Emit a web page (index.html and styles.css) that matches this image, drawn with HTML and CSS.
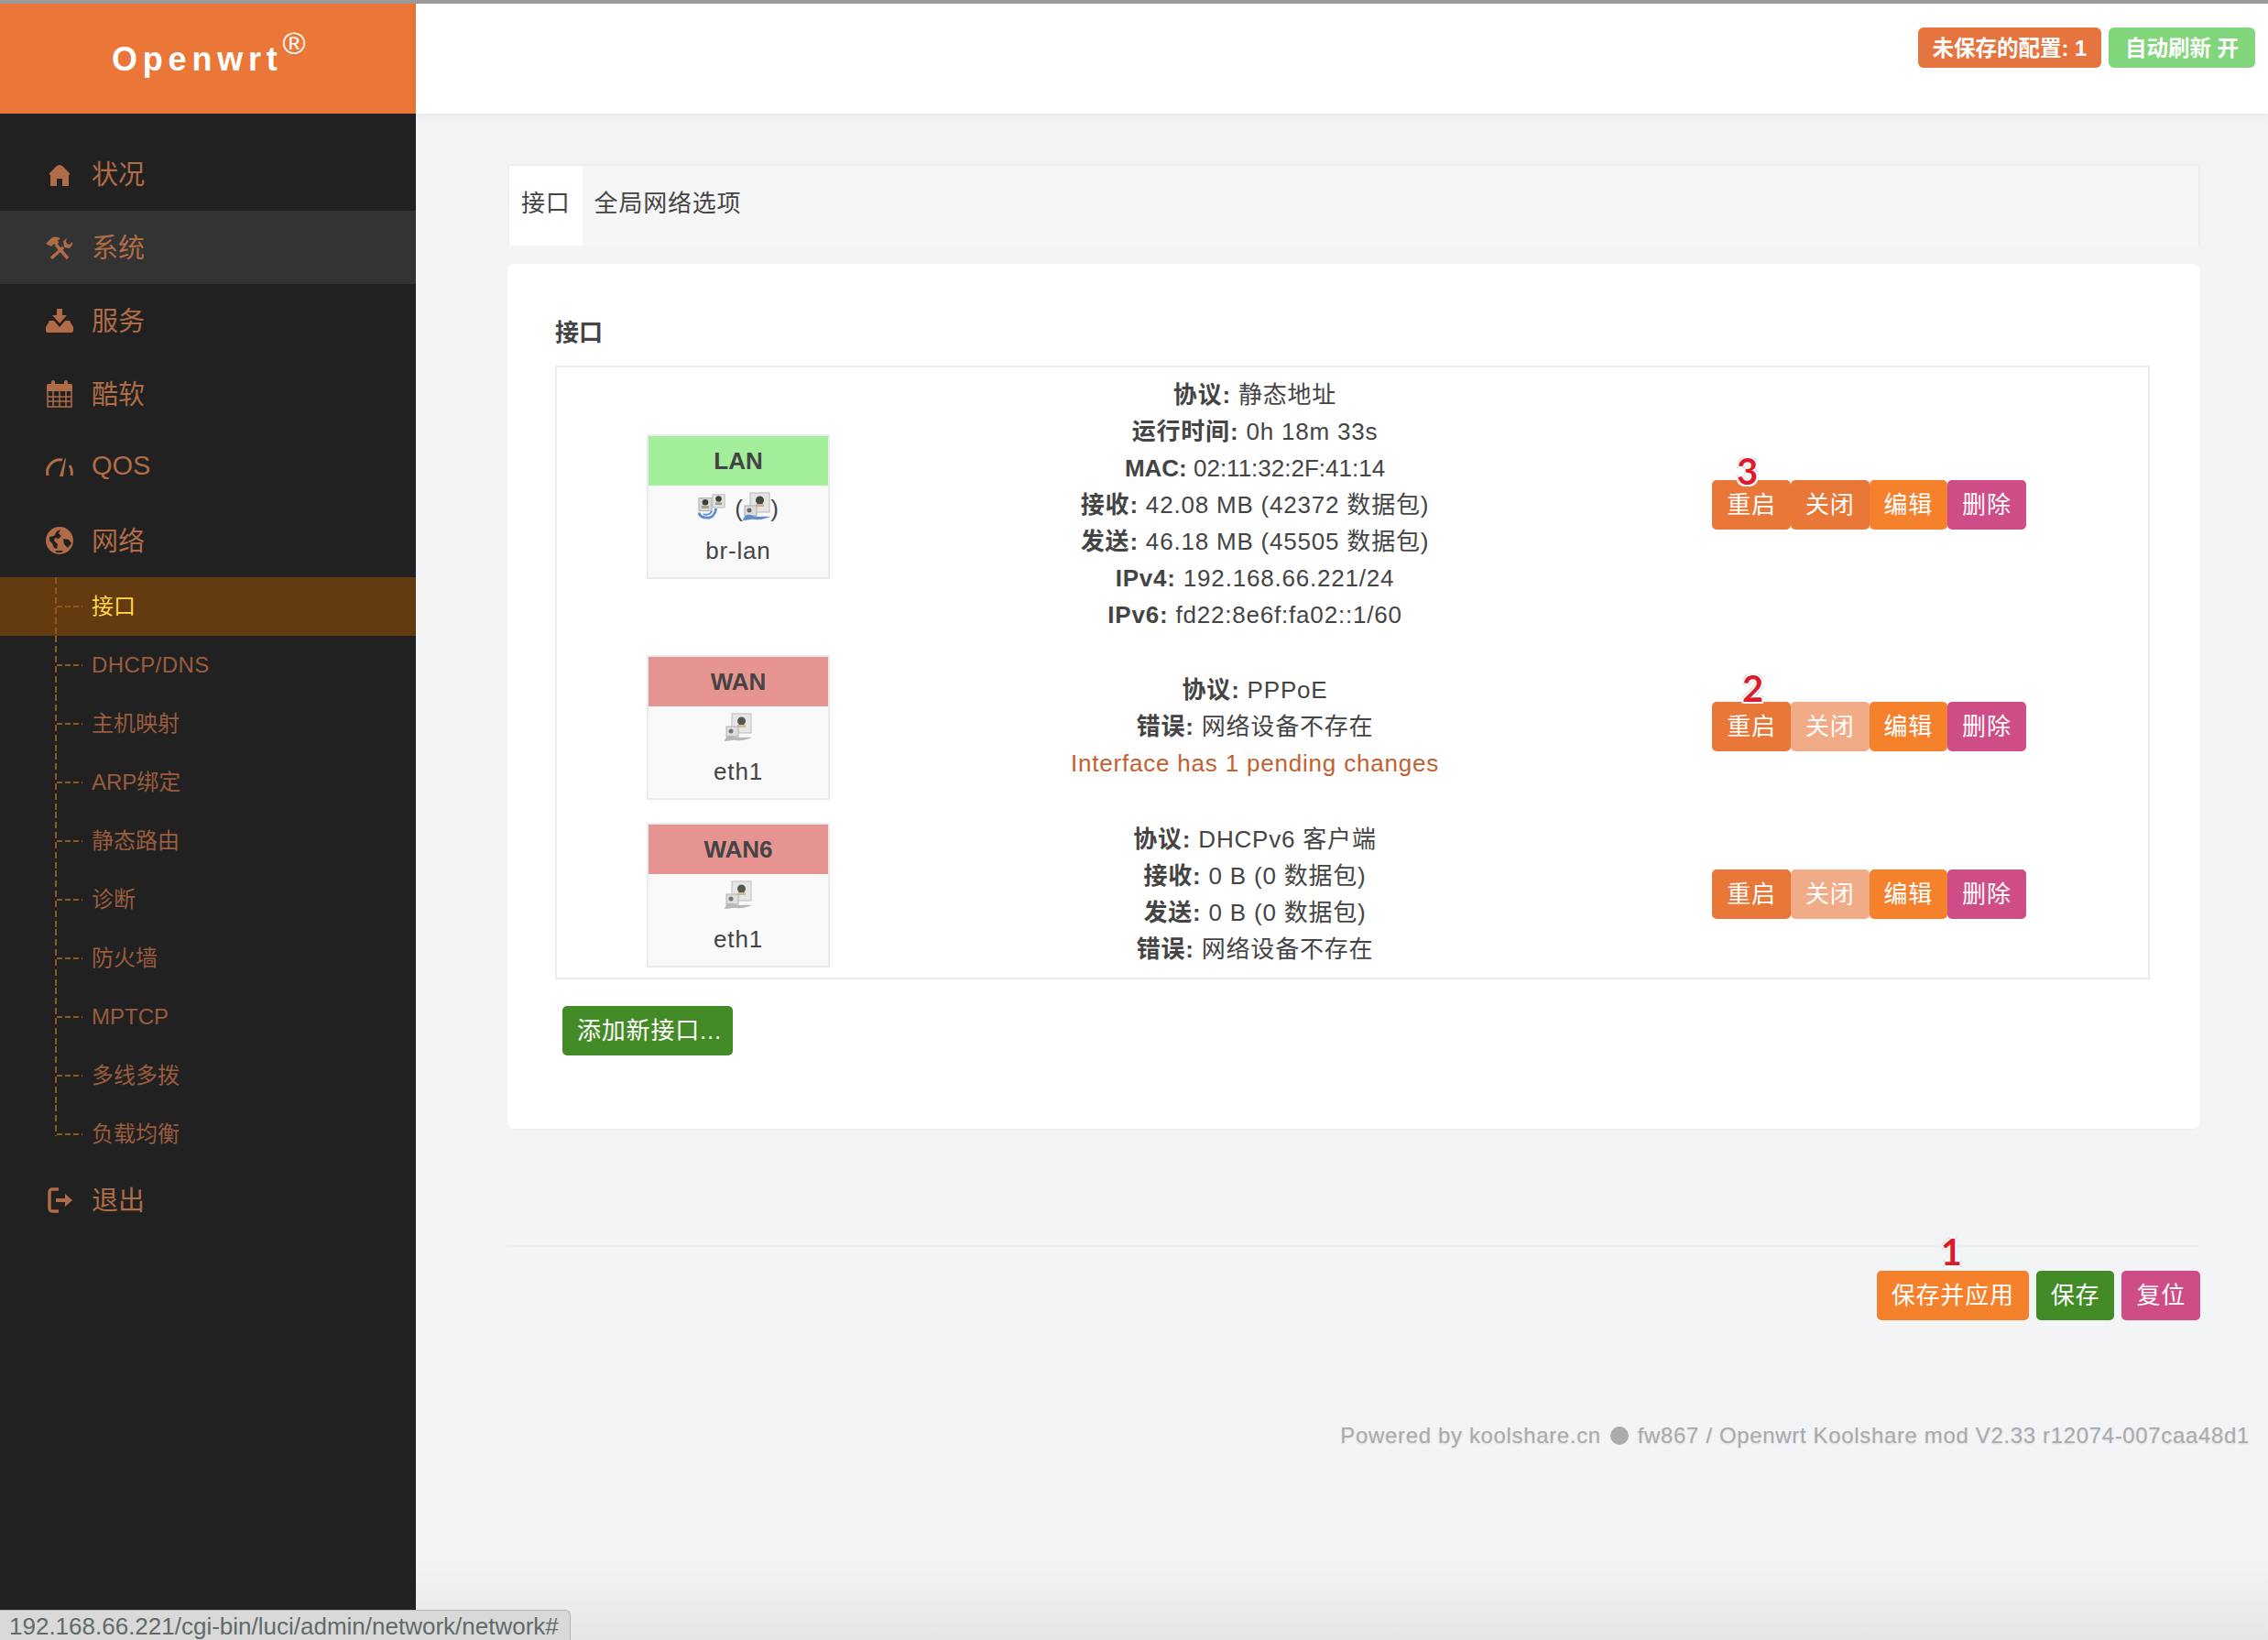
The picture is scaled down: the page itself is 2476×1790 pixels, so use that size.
FILE: index.html
```html
<!DOCTYPE html>
<html lang="zh-CN">
    <head>
        <meta charset="UTF-8" />
        <title>Openwrt - 接口</title>
        <link rel="stylesheet" href="styles.css">
    </head>

    <body>
        <svg class="defs" width="0" height="0">
            <symbol id="port" viewBox="0 0 30 32">
                <rect x="8" y="1" width="21" height="21" fill="#e4e4e4" stroke="#b8b8b8" />
                <circle cx="18.500" cy="9" r="4.500" fill="#46463f" />
                <rect x="14" y="13" width="9" height="3" fill="#c8b98a" />
                <rect x="2" y="15" width="13" height="11" fill="#dcdcdc" stroke="#aaa" />
                <circle cx="7" cy="20" r="2.500" fill="#666" />
                <path d="M0 31c2-7 7-7 11-5 6 2 12 0 19 1-6 2-11 4-17 3-4-1-8 1-13 1z" fill="currentColor" />
            </symbol>
            <symbol id="bridge" viewBox="0 0 32 30">
                <rect x="1" y="5" width="15" height="15" fill="#d8d8d8" stroke="#aaa" />
                <circle cx="8.500" cy="10" r="3.500" fill="#3f3f3a" />
                <rect x="4" y="14" width="9" height="3" fill="#a9a082" />
                <rect x="17" y="1" width="14" height="15" fill="#e4e4e4" stroke="#b4b4b4" />
                <circle cx="24" cy="6" r="3.500" fill="#3f3f3a" />
                <rect x="20" y="10" width="8" height="3" fill="#a9a082" />
                <path d="M1 22c1 5 5 6 10 6s9-4 10-11" fill="none" stroke="#5f8fcb" stroke-width="3" />
                <path d="M6 24c6 1 9-1 10-4" fill="none" stroke="#5f8fcb" stroke-width="2" />
            </symbol>
        </svg>

        <div class="layout">
            <aside class="sidebar">
                <div class="logo">Openwrt<sup>®</sup></div>
                <ul class="nav">
                    <li>
                        <svg class="icon" viewBox="0 0 30 26"><path d="M15 3c-2 0-3 1-5 3l-6 6v1c0 1 1 1 1 1v12h7v-8h6v8h7V14s1 0 1-1v-1l-6-6c-2-2-3-3-5-3z" /></svg>
                        状况
                    </li>
                    <li class="hover">
                        <svg class="icon" viewBox="0 0 30 26">
                            <path d="M0 9l6-6c3-2 7-2 10 1l-3 1 1 3-3 3-2-2-3 3z" />
                            <path d="M11 10l13 15M6 25l13-12" fill="none" stroke-width="3.500" class="line" />
                            <path d="M23 3l-4 3 1 7 6 1 3-4 0-3-3 3-3-1-1-3z" />
                        </svg>
                        系统
                    </li>
                    <li>
                        <svg class="icon" viewBox="0 0 30 26">
                            <path d="M12 0h6v7h5l-8 9-8-9h5z" />
                            <path d="M4 13h5l6 7 6-7h5l4 7v4a2 2 0 0 1-2 2H2a2 2 0 0 1-2-2v-4z" />
                        </svg>
                        服务
                    </li>
                    <li>
                        <svg class="icon" viewBox="0 0 30 30">
                            <path d="M6 2a2 2 0 0 1 4 0v2h10V2a2 2 0 0 1 4 0v2h3a2 2 0 0 1 2 2v6H1V6a2 2 0 0 1 2-2h3z" />
                            <path d="M2 12v17h26V12M2 18h26M2 23h26M8 12v17M15 12v17M22 12v17" fill="none" stroke-width="1.500" class="line" />
                        </svg>
                        酷软
                    </li>
                    <li>
                        <svg class="icon" viewBox="0 0 30 22">
                            <path d="M2 20A14 14 0 0 1 18 3M26 9a14 14 0 0 1 2 11" fill="none" stroke-width="3" class="line" />
                            <path d="M15 21l6-20 1 1-3 19z" />
                        </svg>
                        QOS
                    </li>
                    <li>
                        <svg class="icon" viewBox="0 0 30 30">
                            <circle cx="15" cy="15" r="15" />
                            <path class="land" d="M4 11l5-1 3-5 4-2-2 4 3 3-3 3-4-1-1 3 4 4-1 5-3-1-2-5-3-3zM19 13l6 1 3 4-4 5-4-4zM10 26h9l-2 2h-5z" />
                        </svg>
                        网络
                    </li>
                </ul>
                <ul class="sub">
                    <li class="active">接口</li>
                    <li class="wide">DHCP/DNS</li>
                    <li>主机映射</li>
                    <li>ARP绑定</li>
                    <li>静态路由</li>
                    <li>诊断</li>
                    <li>防火墙</li>
                    <li>MPTCP</li>
                    <li>多线多拨</li>
                    <li>负载均衡</li>
                </ul>
                <ul class="nav nav-end">
                    <li>
                        <svg class="icon" viewBox="0 0 30 28">
                            <path d="M14 2H7a3 3 0 0 0-3 3v18a3 3 0 0 0 3 3h7" fill="none" stroke-width="3.500" class="line" />
                            <path d="M11 12h10V7l8 7-8 7v-5H11z" />
                        </svg>
                        退出
                    </li>
                </ul>
            </aside>

            <div class="main">
                <header class="topbar">
                    <span class="badge badge-orange">未保存的配置: 1</span>
                    <span class="badge badge-green">自动刷新 开</span>
                </header>

                <div class="content">
                    <ul class="tabs">
                        <li class="current">接口</li>
                        <li>全局网络选项</li>
                    </ul>

                    <section class="card">
                        <h3>接口</h3>
                        <div class="iface-table">
                            <div class="iface iface-tall">
                                <div class="box">
                                    <div class="box-title lan">LAN</div>
                                    <div class="box-icons">
                                        <svg class="port" viewBox="0 0 32 30"><use href="#bridge" /></svg>
                                        <span>(</span><svg class="port blue" viewBox="0 0 30 32"><use href="#port" /></svg><span>)</span>
                                    </div>
                                    <div class="box-name">br-lan</div>
                                </div>
                                <div class="info">
                                    <div><b>协议:</b> 静态地址</div>
                                    <div><b>运行时间:</b> 0h 18m 33s</div>
                                    <div class="tight"><b>MAC:</b> 02:11:32:2F:41:14</div>
                                    <div><b>接收:</b> 42.08 MB (42372 数据包)</div>
                                    <div><b>发送:</b> 46.18 MB (45505 数据包)</div>
                                    <div><b>IPv4:</b> 192.168.66.221/24</div>
                                    <div><b>IPv6:</b> fd22:8e6f:fa02::1/60</div>
                                </div>
                                <div class="actions">
                                    <span class="mark mark-3">3</span>
                                    <a class="btn btn-main">重启</a>
                                    <a class="btn btn-main">关闭</a>
                                    <a class="btn btn-edit">编辑</a>
                                    <a class="btn btn-del">删除</a>
                                </div>
                            </div>

                            <div class="iface">
                                <div class="box">
                                    <div class="box-title wan">WAN</div>
                                    <div class="box-icons">
                                        <svg class="port gray" viewBox="0 0 30 32"><use href="#port" /></svg>
                                    </div>
                                    <div class="box-name">eth1</div>
                                </div>
                                <div class="info">
                                    <div><b>协议:</b> PPPoE</div>
                                    <div><b>错误:</b> 网络设备不存在</div>
                                    <div class="pending">Interface has 1 pending changes</div>
                                </div>
                                <div class="actions">
                                    <span class="mark mark-2">2</span>
                                    <a class="btn btn-main">重启</a>
                                    <a class="btn btn-off">关闭</a>
                                    <a class="btn btn-edit">编辑</a>
                                    <a class="btn btn-del">删除</a>
                                </div>
                            </div>

                            <div class="iface">
                                <div class="box">
                                    <div class="box-title wan">WAN6</div>
                                    <div class="box-icons">
                                        <svg class="port gray" viewBox="0 0 30 32"><use href="#port" /></svg>
                                    </div>
                                    <div class="box-name">eth1</div>
                                </div>
                                <div class="info">
                                    <div><b>协议:</b> DHCPv6 客户端</div>
                                    <div><b>接收:</b> 0 B (0 数据包)</div>
                                    <div><b>发送:</b> 0 B (0 数据包)</div>
                                    <div><b>错误:</b> 网络设备不存在</div>
                                </div>
                                <div class="actions">
                                    <a class="btn btn-main">重启</a>
                                    <a class="btn btn-off">关闭</a>
                                    <a class="btn btn-edit">编辑</a>
                                    <a class="btn btn-del">删除</a>
                                </div>
                            </div>
                        </div>
                        <a class="btn btn-save add">添加新接口...</a>
                    </section>

                    <div class="page-actions">
                        <span class="mark mark-1">1</span>
                        <a class="btn btn-edit">保存并应用</a>
                        <a class="btn btn-save">保存</a>
                        <a class="btn btn-del">复位</a>
                    </div>

                    <footer class="foot">Powered by koolshare.cn<i class="dot"></i>fw867 / Openwrt Koolshare mod V2.33 r12074-007caa48d1</footer>
                </div>
            </div>
        </div>

        <div class="fade"></div>
        <div class="status">192.168.66.221/cgi-bin/luci/admin/network/network#</div>
    </body>
</html>
```

FILE: styles.css
```css
* {
    box-sizing: border-box;
}

body {
    margin: 0;
    height: 1790px;
    overflow: hidden;
    position: relative;
    border-top: 4px solid #9a9a9a;
    background: #f3f4f6;
    color: #444;
    font-family: "Liberation Sans", "Noto Sans CJK SC", sans-serif;
    font-size: 26px;
}

ul {
    list-style: none;
    margin: 0;
    padding: 0;
}

.defs {
    position: absolute;
}

.layout {
    display: flex;
    height: 1786px;
}

/* sidebar */
.sidebar {
    width: 454px;
    flex: none;
    background: #212121;
}

.logo {
    height: 120px;
    background: #ea7638;
    color: #fff;
    font-family: "Liberation Sans", sans-serif;
    font-weight: bold;
    font-size: 36px;
    letter-spacing: 5.8px;
    padding: 41px 0 0 122px;
    line-height: 40px;
}

.logo sup {
    font-size: 34px;
    font-weight: normal;
    letter-spacing: 0;
    line-height: 0;
    position: relative;
    top: -5px;
    margin-left: 0;
}

.nav {
    padding-top: 26px;
}

.nav-end {
    padding-top: 0;
}

.nav li {
    display: flex;
    align-items: center;
    gap: 20px;
    height: 80px;
    padding: 0 0 4px 50px;
    color: #b06b47;
    font-size: 29px;
}

.nav li.hover {
    background: #333;
}

.icon {
    width: 30px;
    height: 30px;
    margin-top: 4px;
    fill: #b06b47;
    flex: none;
}

.icon .line {
    stroke: #b06b47;
}

.icon .land {
    fill: #212121;
}

.sub li {
    position: relative;
    height: 64px;
    line-height: 64px;
    padding-left: 100px;
    color: #9a5c3e;
    font-size: 24px;
}

.sub li.wide {
    letter-spacing: 0.4px;
}

.sub li::before {
    content: "";
    position: absolute;
    left: 60px;
    top: 0;
    bottom: 0;
    width: 2px;
    background: repeating-linear-gradient(180deg, #8c5a1c 0 7px, transparent 7px 11px);
}

.sub li:last-child::before {
    bottom: 30px;
}

.sub li::after {
    content: "";
    position: absolute;
    left: 62px;
    top: 31px;
    width: 28px;
    height: 2px;
    background: repeating-linear-gradient(90deg, #8c5a1c 0 6px, transparent 6px 9px);
}

.sub li.active {
    background: #643a10;
    color: #ffd84a;
}

/* top bar and page */
.main {
    flex: 1;
    min-width: 0;
}

.topbar {
    height: 120px;
    background: #fff;
    box-shadow: 0 2px 10px rgba(0, 0, 0, 0.06);
    display: flex;
    justify-content: flex-end;
    align-items: flex-start;
    gap: 8px;
    padding: 26px 14px 0 0;
}

.badge {
    height: 44px;
    line-height: 46px;
    padding: 0 16px;
    border-radius: 6px;
    color: #fff;
    font-size: 23.500px;
    font-weight: bold;
}

.badge-orange {
    background: #e5743e;
}

.badge-green {
    background: #81d57b;
    padding: 0 18px;
}

.content {
    padding: 55px 74px 0 100px;
}

.tabs {
    display: flex;
    height: 89px;
    background: #f6f6f7;
    border: 2px solid #eceef0;
    border-bottom: 0;
    line-height: 82px;
    letter-spacing: 0.8px;
}

.tabs li {
    padding: 0 13px;
}

.tabs li.current {
    background: #fff;
}

.card {
    margin-top: 20px;
    height: 944px;
    background: #fff;
    border-radius: 8px;
    padding: 56px 55px 0 52px;
    box-shadow: 0 1px 2px rgba(0, 0, 0, 0.03);
}

.card h3 {
    margin: 0 0 17px;
    font-size: 26px;
    line-height: 38px;
}

.iface-table {
    border: 2px solid #ebecee;
}

.iface {
    display: grid;
    grid-template-columns: 396px 732px 1fr;
    align-items: center;
    height: 183px;
}

.iface-tall {
    height: 300px;
}

.box {
    width: 200px;
    height: 158px;
    margin-top: 3px;
    justify-self: center;
    border: 2px solid #e9ebed;
    background: #f9f9f9;
    text-align: center;
}

.box-title {
    height: 54px;
    line-height: 54px;
    font-weight: bold;
    font-size: 26px;
}

.lan {
    background: #a2ee9b;
}

.wan {
    background: #e69491;
}

.box-icons {
    height: 46px;
    padding-top: 7px;
    display: flex;
    justify-content: center;
    align-items: flex-start;
    line-height: 36px;
}

.port {
    width: 30px;
    height: 32px;
    flex: none;
}

.box-icons span {
    width: 9px;
}

.box-icons span:first-of-type {
    margin-left: 10px;
}

.blue {
    color: #5f8fcb;
}

.gray {
    color: #b0b0b0;
    opacity: 0.9;
}

.box-name {
    line-height: 50px;
    letter-spacing: 0.8px;
}

.info {
    text-align: center;
    line-height: 40px;
    letter-spacing: 0.8px;
}

.info .tight {
    letter-spacing: 0;
}

.pending {
    color: #c2602f;
}

.actions {
    position: relative;
    display: flex;
    justify-content: center;
}

.btn {
    display: inline-block;
    height: 54px;
    line-height: 54px;
    padding: 0 16px;
    border-radius: 5px;
    color: #fff;
    font-size: 26px;
    letter-spacing: 0.8px;
    white-space: nowrap;
}

.btn-main {
    background: #e97737;
}

.btn-off {
    background: #f1ab87;
}

.btn-edit {
    background: #f6812d;
}

.btn-del {
    background: #cf4d86;
}

.btn-save {
    background: #438b26;
}

.add {
    display: block;
    width: 186px;
    margin: 29px 0 0 8px;
}

.page-actions {
    position: relative;
    margin-top: 127px;
    padding-top: 26px;
    border-top: 2px solid #eeeff1;
    display: flex;
    justify-content: flex-end;
    gap: 8px;
}

/* red numbers drawn over the screenshot */
.mark {
    position: absolute;
    color: #dc1c2c;
    font-family: Lato, sans-serif;
    font-weight: bold;
    font-size: 40px;
    line-height: 40px;
    text-shadow: 2px 0 0 #fff, -2px 0 0 #fff, 0 2px 0 #fff, 0 -2px 0 #fff, 2px 2px 0 #ddd, -2px 2px 0 #ddd, 2px -2px 0 #ddd, -2px -2px 0 #ddd;
}

.mark-3 {
    left: 160px;
    top: -30px;
}

.mark-2 {
    left: 166px;
    top: -35px;
}

.mark-1 {
    right: 260px;
    top: -15px;
}

.foot {
    margin: 106px -54px 0 0;
    text-align: right;
    white-space: nowrap;
    line-height: 40px;
    font-size: 24px;
    letter-spacing: 0.65px;
    color: #a9abad;
    text-shadow: 0 1px 2px rgba(0, 0, 0, 0.12);
}

.dot {
    display: inline-block;
    width: 20px;
    height: 20px;
    margin: 0 10px;
    vertical-align: -2px;
    border-radius: 50%;
    background: #a9abad;
}

/* browser status bubble */
.fade {
    position: absolute;
    left: 454px;
    right: 0;
    bottom: 0;
    height: 90px;
    background: linear-gradient(rgba(0, 0, 0, 0), rgba(0, 0, 0, 0.06));
}

.status {
    position: absolute;
    left: 0;
    bottom: 0;
    width: 623px;
    height: 33px;
    padding: 3px 0 0 10px;
    background: #d9d9d9;
    border: 1px solid #b4b4b4;
    border-width: 1px 1px 0 0;
    border-top-right-radius: 6px;
    color: #5f6b68;
    font-size: 26px;
    line-height: 29px;
    white-space: nowrap;
}
```
